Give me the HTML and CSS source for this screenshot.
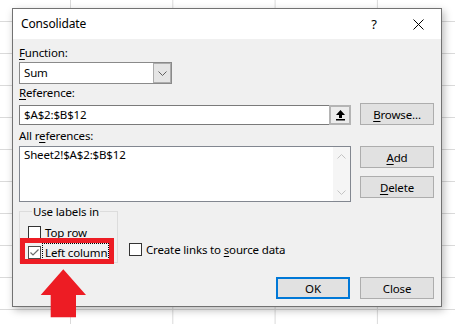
FILE: index.html
```html
<!DOCTYPE html>
<html>
<head>
<meta charset="utf-8">
<link rel="stylesheet" href="styles.css">
</head>
<body>
<div class="sheet">
  <div class="dialog">
    <div class="titlebar">
      <span class="title">Consolidate</span>
      <span class="tb-btn help">?</span>
      <span class="tb-btn close">
        <svg width="11" height="11" viewBox="0 0 11 11"><path d="M0.5 0.5 L10.5 10.5 M10.5 0.5 L0.5 10.5" stroke="#000" stroke-width="1" fill="none"/></svg>
      </span>
    </div>
    <div class="content">
      <div class="lbl"><u>F</u>unction:</div>
      <div class="select">
        <span class="sel-text">Sum</span>
        <span class="dd">
          <svg width="9" height="5" viewBox="0 0 9 5"><path d="M0.5 0.5 L4.5 4.5 L8.5 0.5" stroke="#606060" stroke-width="1" fill="none"/></svg>
        </span>
      </div>
      <div class="lbl lbl-ref"><u>R</u>eference:</div>
      <div class="row row-ref">
        <div class="input">
          <span class="in-text">$A$2:$B$12</span>
          <span class="collapse">
            <svg width="11" height="12" viewBox="0 0 11 12"><path d="M5.5 1 L10 6 L7 6 L7 9 L4 9 L4 6 L1 6 Z" fill="#000"/><rect x="1" y="10" width="9" height="1.5" fill="#000"/></svg>
          </span>
        </div>
        <button class="btn"><u>B</u>rowse...</button>
      </div>
      <div class="lbl lbl-all">All r<u>e</u>ferences:</div>
      <div class="row row-list">
        <div class="list">
          <div class="items">Sheet2!$A$2:$B$12</div>
          <div class="scroll">
            <svg width="9" height="5" viewBox="0 0 9 5"><path d="M0.5 4.5 L4.5 0.5 L8.5 4.5" stroke="#c4c4c4" stroke-width="1" fill="none"/></svg>
            <svg width="9" height="5" viewBox="0 0 9 5"><path d="M0.5 0.5 L4.5 4.5 L8.5 0.5" stroke="#c4c4c4" stroke-width="1" fill="none"/></svg>
          </div>
        </div>
        <div class="btncol">
          <button class="btn"><u>A</u>dd</button>
          <button class="btn"><u>D</u>elete</button>
        </div>
      </div>
      <div class="labels-row">
        <fieldset class="group">
          <legend>Use labels in</legend>
          <div class="check"><span class="box"></span><span class="ctext"><u>T</u>op row</span></div>
          <div class="check"><span class="box checked"><svg width="11" height="11" viewBox="0 0 11 11"><path d="M1.5 5.5 L4 8 L9.5 2.5" stroke="#6b6b6b" stroke-width="1.2" fill="none"/></svg></span><span class="ctext focus"><u>L</u>eft column</span></div>
        </fieldset>
        <div class="check links"><span class="box"></span><span class="ctext">Create links to <u>s</u>ource data</span></div>
      </div>
      <div class="footer">
        <button class="btn ok">OK</button>
        <button class="btn">Close</button>
      </div>
    </div>
  </div>
  <div class="highlight"></div>
  <svg class="arrow" width="48" height="51" viewBox="0 0 48 51"><polygon points="23.3,1.3 46,27 36,27 36,49.3 10.7,49.3 10.7,27 0.7,27" fill="#ed1c24"/></svg>
</div>
</body>
</html>
```
FILE: styles.css
```css
html, body {
  margin: 0;
  padding: 0;
}
body {
  width: 455px;
  height: 324px;
  overflow: hidden;
  font-family: "Noto Sans", "Open Sans", sans-serif;
  font-size: 11.5px;
  letter-spacing: -0.15px;
  color: #000;
}
.sheet {
  position: relative;
  width: 455px;
  height: 324px;
  background-color: #fff;
  background-image:
    linear-gradient(to right, #dadada 1px, transparent 1px),
    linear-gradient(to bottom, #dadada 1px, transparent 1px);
  background-size: 102.3px 32px, 102.3px 32px;
  background-position: 70px 21px, 70px 21px;
}
.dialog {
  position: absolute;
  left: 12px;
  top: 8px;
  width: 430px;
  box-sizing: border-box;
  border: 1px solid #727272;
  background: #f0f0f0;
  box-shadow: 2px 3px 8px rgba(0,0,0,0.28);
}
.titlebar {
  height: 30px;
  background: #fff;
  display: flex;
  align-items: center;
  padding-left: 8px;
}
.title {
  flex: 1;
  font-size: 12px;
  line-height: 29px;
  padding-bottom: 1px;
}
.tb-btn {
  width: 44px;
  height: 30px;
  display: flex;
  align-items: center;
  justify-content: center;
}
.help {
  font-size: 13px;
  padding-bottom: 1px;
}
.close {
  margin-right: 1px;
}
.content {
  padding: 0 7px 7px 6px;
}
.lbl {
  line-height: 15px;
  height: 15px;
  margin-top: 6px;
}
.lbl-ref { margin-top: 1px; }
.lbl-all { margin-top: 3px; }
u { text-decoration-thickness: 1px; text-underline-offset: 2px; }
.select {
  margin-top: 2px;
  width: 153px;
  height: 22px;
  box-sizing: border-box;
  border: 1px solid #8a8a8a;
  background: #fff;
  display: flex;
}
.sel-text {
  flex: 1;
  padding-left: 4px;
  line-height: 19px;
}
.dd {
  width: 18px;
  background: #e5e5e5;
  box-shadow: inset 0 0 0 1px #acacac;
  display: flex;
  align-items: center;
  justify-content: center;
}
.row {
  display: flex;
  gap: 9px;
}
.row-ref {
  margin-top: 3px;
  align-items: flex-end;
}
.input {
  width: 332px;
  height: 20px;
  box-sizing: border-box;
  border: 1px solid #7a7a7a;
  background: #fff;
  display: flex;
}
.in-text {
  flex: 1;
  padding-left: 4px;
  line-height: 18px;
}
.collapse {
  width: 22px;
  margin: -1px -1px -1px 0;
  box-sizing: border-box;
  border: 2px solid #b4b4b4;
  background: #ececec;
  display: flex;
  align-items: center;
  justify-content: center;
}
.btn {
  width: 74px;
  height: 22px;
  box-sizing: border-box;
  border: 1px solid #adadad;
  background: #e1e1e1;
  font-family: inherit;
  font-size: 11.5px;
  letter-spacing: -0.15px;
  color: #000;
  padding: 0;
  line-height: 19px;
}
.row-list {
  margin-top: 3px;
  align-items: flex-start;
}
.list {
  width: 332px;
  height: 56px;
  box-sizing: border-box;
  border: 1px solid #828790;
  background: #fff;
  display: flex;
}
.items {
  flex: 1;
  padding-left: 4px;
  line-height: 15px;
}
.scroll {
  width: 17px;
  background: #f5f5f5;
  display: flex;
  flex-direction: column;
  justify-content: space-between;
  align-items: center;
  padding: 7px 0 6px;
  box-sizing: border-box;
}
.btncol {
  display: flex;
  flex-direction: column;
  gap: 8px;
}
.labels-row {
  display: flex;
  align-items: flex-end;
  margin-top: 2px;
}
.group {
  margin: 0;
  width: 99px;
  box-sizing: border-box;
  border: 1px solid #dcdcdc;
  padding: 3px 0 0 8px;
}
.group legend {
  padding: 0 1px;
  margin-left: 4px;
  line-height: 15px;
}
.check {
  height: 20px;
  display: flex;
  align-items: center;
  white-space: nowrap;
}
.box {
  width: 13px;
  height: 13px;
  box-sizing: border-box;
  border: 1px solid #333;
  background: #fff;
  display: flex;
  align-items: center;
  justify-content: center;
  flex: none;
}
.box.checked {
  border-color: #4d4d4d;
}
.ctext {
  margin-left: 4px;
  line-height: 15px;
}
.focus {
  outline: 1px dotted #000;
  outline-offset: 1px;
  margin-left: 3px;
  padding-left: 1px;
}
.links {
  margin-left: 11px;
  margin-bottom: 4px;
}
.footer {
  margin-top: 14px;
  display: flex;
  justify-content: flex-end;
  gap: 10px;
}
.btn.ok {
  border: 2px solid #0078d7;
}
.highlight {
  position: absolute;
  left: 20px;
  top: 238px;
  width: 94px;
  height: 26px;
  box-sizing: border-box;
  border: 5px solid #ed1c24;
}
.arrow {
  position: absolute;
  left: 40px;
  top: 268px;
}
```
